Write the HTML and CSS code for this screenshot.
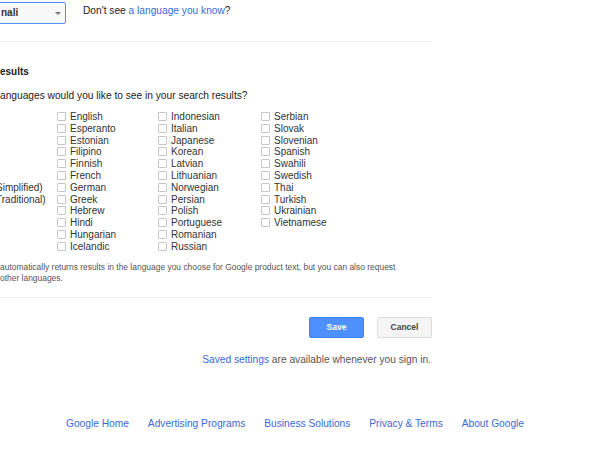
FILE: index.html
```html
<!DOCTYPE html>
<html lang="en">
<head>
  <meta charset="UTF-8">
  <title>Search Settings</title>
  <link rel="stylesheet" href="styles.css">
</head>
<body>

<div class="page">
  <div class="lang-row">
    <div class="select">nali<span class="arrow"></span></div>
    <p class="hint">Don't see <a href="#">a language you know</a>?</p>
  </div>
  <hr class="divider">

  <h2 class="section-title">esults</h2>
  <p class="question">anguages would you like to see in your search results?</p>

  <div class="lang-grid">
    <div class="lang-col first">
      <span class="cut">Simplified)</span>
      <span class="cut">Traditional)</span>
    </div>
    <div class="lang-col c1">
      <label><input type="checkbox">English</label>
      <label><input type="checkbox">Esperanto</label>
      <label><input type="checkbox">Estonian</label>
      <label><input type="checkbox">Filipino</label>
      <label><input type="checkbox">Finnish</label>
      <label><input type="checkbox">French</label>
      <label><input type="checkbox">German</label>
      <label><input type="checkbox">Greek</label>
      <label><input type="checkbox">Hebrew</label>
      <label><input type="checkbox">Hindi</label>
      <label><input type="checkbox">Hungarian</label>
      <label><input type="checkbox">Icelandic</label>
    </div>
    <div class="lang-col c2">
      <label><input type="checkbox">Indonesian</label>
      <label><input type="checkbox">Italian</label>
      <label><input type="checkbox">Japanese</label>
      <label><input type="checkbox">Korean</label>
      <label><input type="checkbox">Latvian</label>
      <label><input type="checkbox">Lithuanian</label>
      <label><input type="checkbox">Norwegian</label>
      <label><input type="checkbox">Persian</label>
      <label><input type="checkbox">Polish</label>
      <label><input type="checkbox">Portuguese</label>
      <label><input type="checkbox">Romanian</label>
      <label><input type="checkbox">Russian</label>
    </div>
    <div class="lang-col">
      <label><input type="checkbox">Serbian</label>
      <label><input type="checkbox">Slovak</label>
      <label><input type="checkbox">Slovenian</label>
      <label><input type="checkbox">Spanish</label>
      <label><input type="checkbox">Swahili</label>
      <label><input type="checkbox">Swedish</label>
      <label><input type="checkbox">Thai</label>
      <label><input type="checkbox">Turkish</label>
      <label><input type="checkbox">Ukrainian</label>
      <label><input type="checkbox">Vietnamese</label>
    </div>
  </div>

  <p class="note">automatically returns results in the language you choose for Google product text, but you can also request<br>other languages.</p>
  <hr class="divider second">

  <div class="actions">
    <button class="btn primary">Save</button>
    <button class="btn">Cancel</button>
  </div>
  <p class="saved"><a href="#">Saved settings</a> are available whenever you sign in.</p>
</div>

<div class="footer">
  <a href="#">Google Home</a>
  <a href="#">Advertising Programs</a>
  <a href="#">Business Solutions</a>
  <a href="#">Privacy &amp; Terms</a>
  <a href="#">About Google</a>
</div>

</body>
</html>
```

FILE: styles.css
```css
body {
  margin: 0;
  width: 600px;
  height: 450px;
  overflow: hidden;
  background: #fff;
  color: #222;
  font-family: "Liberation Sans", Arial, sans-serif;
  font-size: 10.2px;
}
a {
  color: #3a6ad4;
  text-decoration: none;
}
.page {
  width: 432px;
}
.lang-row {
  display: flex;
  align-items: flex-start;
  padding-top: 2px;
}
.select {
  position: relative;
  box-sizing: border-box;
  width: 68px;
  height: 22px;
  margin-left: -2px;
  padding-left: 2px;
  border: 1px solid #4d90fe;
  border-radius: 2px;
  background: #f8f8f8;
  font-weight: bold;
  font-size: 10px;
  line-height: 20px;
  color: #333;
}
.arrow {
  position: absolute;
  right: 4px;
  top: 9px;
  border-left: 3px solid transparent;
  border-right: 3px solid transparent;
  border-top: 3px solid #777;
}
.hint {
  margin: 3px 0 0 17px;
  line-height: 12px;
}
.divider {
  border: 0;
  border-top: 1px solid #ececec;
  margin: 17px 0 0;
}
.section-title {
  margin: 23.5px 0 0;
  font-size: 10px;
  line-height: 12px;
  color: #222;
}
.question {
  margin: 12.5px 0 0;
  line-height: 12px;
}
.lang-grid {
  display: flex;
  margin-top: 8.6px;
}
.lang-col {
  display: flex;
  flex-direction: column;
}
.lang-col.first {
  width: 57px;
  padding-top: 70.8px;
}
.lang-col.c1 {
  width: 101px;
}
.lang-col.c2 {
  width: 103px;
}
.lang-col label,
.cut {
  display: flex;
  align-items: center;
  height: 11.8px;
  font-size: 10px;
  color: #333;
  white-space: nowrap;
}
.cut {
  margin-left: -4px;
}
.lang-col input {
  appearance: none;
  box-sizing: border-box;
  width: 9px;
  height: 9px;
  margin: 0 4px 0 0;
  border: 1px solid #c6c6c6;
  border-radius: 1px;
  background: #fff;
}
.note {
  margin: 9.4px 0 0;
  font-size: 8.45px;
  line-height: 11px;
  color: #555;
  white-space: nowrap;
}
.divider.second {
  margin-top: 13.3px;
}
.actions {
  display: flex;
  justify-content: flex-end;
  gap: 13px;
  margin-top: 19px;
}
.btn {
  box-sizing: border-box;
  width: 55px;
  height: 21px;
  border: 1px solid #dcdcdc;
  border-radius: 2px;
  background: #f5f5f5;
  color: #444;
  font-family: "Liberation Sans", Arial, sans-serif;
  font-size: 8.5px;
  font-weight: bold;
  padding: 0;
}
.btn.primary {
  background: #4d90fe;
  border-color: #3f84f5;
  color: #fff;
}
.saved {
  margin: 16px 0 0;
  text-align: right;
  line-height: 12px;
  color: #555;
  padding-right: 1px;
}
.footer {
  display: flex;
  gap: 19px;
  padding-left: 66px;
  margin-top: 52.5px;
  line-height: 12px;
  font-size: 10.2px;
}
```
